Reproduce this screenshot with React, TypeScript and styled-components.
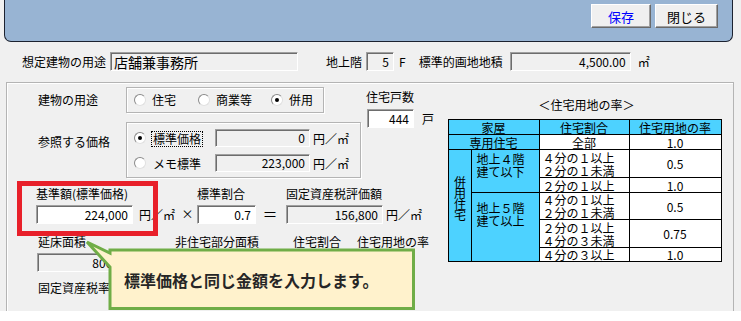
import React from 'react';
import styled, { createGlobalStyle } from 'styled-components';

const GlobalStyle = createGlobalStyle`
  * { box-sizing: border-box; }
  html, body { margin: 0; padding: 0; background: #fff; }
  body {
    font-family: "Noto Sans CJK JP", "Noto Sans", sans-serif;
    font-size: 12px;
    color: #000;
  }
`;

const Window = styled.div`
  position: relative;
  width: 741px;
  height: 311px;
  background: #f0f0f0;
  overflow: hidden;
  display: flex;
  flex-direction: column;
`;

const Header = styled.div`
  height: 42px;
  margin: 0 8px 0 4px;
  background: #98b4d3;
  border: 1px solid #1c2230;
  border-top: none;
  border-radius: 0 0 7px 7px;
  display: flex;
  justify-content: flex-end;
  align-items: flex-start;
  gap: 4px;
  padding: 4px 14px 0 0;
`;

const Button = styled.button<{ $w: number; $blue?: boolean }>`
  width: ${(p) => p.$w}px;
  height: 24px;
  padding: 0;
  font-family: inherit;
  font-size: 13px;
  color: ${(p) => (p.$blue ? '#0000ff' : '#000')};
  background: #f0f0f0;
  border: 1px solid;
  border-color: #fff #696969 #696969 #fff;
  box-shadow: inset -1px -1px 0 #a0a0a0;
`;

const TopRow = styled.div`
  display: flex;
  align-items: center;
  height: 19px;
  margin-top: 10px;
  padding-left: 22px;
`;

const Label = styled.span<{ $ml?: number }>`
  margin-left: ${(p) => p.$ml ?? 0}px;
  line-height: 14px;
  white-space: nowrap;
`;

const TextBox = styled.div<{ $w: number; $white?: boolean; $left?: boolean; $size?: number; $h?: number; $ml?: number }>`
  flex: none;
  width: ${(p) => p.$w}px;
  height: ${(p) => p.$h ?? 19}px;
  margin-left: ${(p) => p.$ml ?? 0}px;
  background: ${(p) => (p.$white ? '#fff' : '#f0f0f0')};
  border: 1px solid;
  border-color: #a0a0a0 #fff #fff #a0a0a0;
  box-shadow: inset 1px 1px 0 #6d6d6d;
  display: flex;
  align-items: center;
  justify-content: ${(p) => (p.$left ? 'flex-start' : 'flex-end')};
  padding: 0 4px 0 3px;
  font-size: ${(p) => p.$size ?? 12}px;
  line-height: 1;
  white-space: nowrap;
  overflow: hidden;
`;

const Group = styled.div`
  flex: 1;
  margin: 11px 7px 0 6px;
  border: 1px solid #b4b4b4;
  border-bottom: none;
  box-shadow: inset 1px 1px 0 #fff;
  display: flex;
`;

const LeftCol = styled.div`
  width: 433px;
  flex: none;
  display: flex;
  flex-direction: column;
  padding-top: 4px;
`;

const TopArea = styled.div`
  display: flex;
  align-items: flex-start;
`;

const Choices = styled.div`
  display: flex;
  flex-direction: column;
  padding-left: 31px;
`;

const ChoiceRow = styled.div<{ $mt?: number; $top?: boolean }>`
  display: flex;
  align-items: ${(p) => (p.$top ? 'flex-start' : 'center')};
  margin-top: ${(p) => p.$mt ?? 0}px;
`;

const RowLabel = styled.span<{ $mt?: number }>`
  width: 88px;
  flex: none;
  line-height: 14px;
  margin-top: ${(p) => p.$mt ?? 0}px;
`;

const Frame = styled.div<{ $w: number; $h: number; $column?: boolean }>`
  width: ${(p) => p.$w}px;
  height: ${(p) => p.$h}px;
  border: 1px solid #b4b4b4;
  box-shadow: inset 1px 1px 0 #fff, 1px 1px 0 #fff;
  display: flex;
  flex-direction: ${(p) => (p.$column ? 'column' : 'row')};
  align-items: ${(p) => (p.$column ? 'stretch' : 'center')};
  gap: ${(p) => (p.$column ? '7px' : '0')};
  padding: ${(p) => (p.$column ? '6px 0 0 7px' : '0 0 0 7px')};
`;

const Option = styled.label<{ $mr?: number }>`
  display: flex;
  align-items: center;
  gap: 6px;
  margin-right: ${(p) => p.$mr ?? 0}px;
  line-height: 14px;
  white-space: nowrap;
`;

const Radio = styled.span<{ $on?: boolean }>`
  flex: none;
  width: 12px;
  height: 12px;
  border-radius: 50%;
  background: #fff;
  border: 1px solid;
  border-color: #8a8a8a #e0e0e0 #e0e0e0 #8a8a8a;
  display: inline-flex;
  align-items: center;
  justify-content: center;

  &::after {
    content: '';
    width: 4px;
    height: 4px;
    border-radius: 50%;
    background: ${(p) => (p.$on ? '#000' : 'transparent')};
  }
`;

const PriceRow = styled.div`
  display: flex;
  align-items: center;
  height: 18px;
`;

const PriceName = styled.span<{ $focus?: boolean }>`
  width: 64px;
  margin-left: 5px;
  flex: none;

  & > span {
    display: inline-block;
    line-height: 14px;
    padding: 0 1px;
    border: 1px dotted ${(p) => (p.$focus ? '#000' : 'transparent')};
  }
`;

const Unit = styled.span<{ $ml?: number; $w?: number }>`
  margin-left: ${(p) => p.$ml ?? 0}px;
  width: ${(p) => (p.$w ? `${p.$w}px` : 'auto')};
  flex: none;
  line-height: 19px;
  white-space: nowrap;
`;

const HouseCount = styled.div`
  margin-left: 5px;
  padding-top: 3px;
  display: flex;
  flex-direction: column;
  gap: 5px;
`;

const Inline = styled.div`
  display: flex;
  align-items: center;
`;

const LowerArea = styled.div`
  margin-top: 9px;
  display: flex;
  flex-direction: column;
`;

const FormulaRow = styled.div<{ $pl: number; $mt?: number }>`
  display: flex;
  align-items: flex-end;
  padding-left: ${(p) => p.$pl}px;
  margin-top: ${(p) => p.$mt ?? 0}px;
`;

const Field = styled.div<{ $w?: number; $ml?: number }>`
  display: flex;
  flex-direction: column;
  gap: 4px;
  flex: none;
  width: ${(p) => (p.$w ? `${p.$w}px` : 'auto')};
  margin-left: ${(p) => p.$ml ?? 0}px;
`;

const Op = styled.span<{ $w: number; $ml: number; $size?: number }>`
  width: ${(p) => p.$w}px;
  margin-left: ${(p) => p.$ml}px;
  flex: none;
  text-align: center;
  font-size: ${(p) => p.$size ?? 12}px;
  line-height: 17px;
  align-self: flex-end;
  margin-bottom: 2px;
`;

const TablePanel = styled.div`
  padding: 15px 0 0 8px;
  display: flex;
  flex-direction: column;
  align-items: center;
  width: 281px;
`;

const TableTitle = styled.div`
  line-height: 14px;
  margin-bottom: 7px;
  padding-left: 4px;
`;

const RateTable = styled.table`
  border-collapse: collapse;
  table-layout: fixed;
  width: 273px;
  font-size: 12px;
  line-height: 13px;
`;

const Col = styled.col<{ $w: number }>`
  width: ${(p) => p.$w}px;
`;

const Tr = styled.tr<{ $h: number }>`
  height: ${(p) => p.$h}px;
`;

const Cell = styled.td<{ $bg?: boolean; $pl?: number; $pt?: number; $pb?: number }>`
  border: 1px solid #000;
  padding: ${(p) => p.$pt ?? 0}px 0 ${(p) => p.$pb ?? 0}px ${(p) => p.$pl ?? 0}px;
  background: ${(p) => (p.$bg ? '#4dd2ff' : '#fff')};
  text-align: ${(p) => (p.$pl !== undefined ? 'left' : 'center')};
  vertical-align: ${(p) => (p.$pt !== undefined ? 'top' : 'middle')};
  white-space: nowrap;
`;

const Vertical = styled.span`
  display: inline-block;
  writing-mode: vertical-rl;
  text-orientation: upright;
  letter-spacing: -1px;
  line-height: 14px;
`;

const Highlight = styled.div`
  position: absolute;
  left: 17px;
  top: 181px;
  width: 141px;
  height: 55px;
  border: 5px solid #e8202a;
`;

const Callout = styled.div`
  position: absolute;
  left: 84px;
  top: 238px;
  width: 334px;
  height: 74px;

  svg {
    position: absolute;
    inset: 0;
  }
`;

const CalloutText = styled.div`
  position: relative;
  padding: 32px 0 0 40px;
  font-size: 16px;
  font-weight: 700;
  line-height: 20px;
  color: #262626;
  white-space: nowrap;
`;

export default function App() {
  return (
    <>
      <GlobalStyle />
      <Window>
        <Header>
          <Button $w={60} $blue>保存</Button>
          <Button $w={63}>閉じる</Button>
        </Header>

        <TopRow>
          <Label>想定建物の用途</Label>
          <TextBox $w={188} $ml={4} $left $size={14}>店舗兼事務所</TextBox>
          <Label $ml={28}>地上階</Label>
          <TextBox $w={28} $ml={4}>5</TextBox>
          <Label $ml={5}>F</Label>
          <Label $ml={13}>標準的画地地積</Label>
          <TextBox $w={121} $ml={7}>4,500.00</TextBox>
          <Label $ml={7}>㎡</Label>
        </TopRow>

        <Group>
          <LeftCol>
            <TopArea>
              <Choices>
                <ChoiceRow>
                  <RowLabel>建物の用途</RowLabel>
                  <Frame $w={198} $h={26}>
                    <Option $mr={22}><Radio />住宅</Option>
                    <Option $mr={19}><Radio />商業等</Option>
                    <Option><Radio $on />併用</Option>
                  </Frame>
                </ChoiceRow>
                <ChoiceRow $mt={9} $top>
                  <RowLabel $mt={13}>参照する価格</RowLabel>
                  <Frame $w={235} $h={56} $column>
                    <PriceRow>
                      <Radio $on />
                      <PriceName $focus><span>標準価格</span></PriceName>
                      <TextBox $w={95} $h={18}>0</TextBox>
                      <Unit $ml={3}>円／㎡</Unit>
                    </PriceRow>
                    <PriceRow>
                      <Radio />
                      <PriceName><span>メモ標準</span></PriceName>
                      <TextBox $w={95} $h={18}>223,000</TextBox>
                      <Unit $ml={3}>円／㎡</Unit>
                    </PriceRow>
                  </Frame>
                </ChoiceRow>
              </Choices>
              <HouseCount>
                <Label>住宅戸数</Label>
                <Inline>
                  <TextBox $w={47} $ml={1} $white>444</TextBox>
                  <Unit $ml={8}>戸</Unit>
                </Inline>
              </HouseCount>
            </TopArea>

            <LowerArea>
              <FormulaRow $pl={29}>
                <Field>
                  <Label>基準額(標準価格)</Label>
                  <TextBox $w={97} $white>224,000</TextBox>
                </Field>
                <Unit $ml={6} $w={40}>円／㎡</Unit>
                <Op $w={13} $ml={2}>×</Op>
                <Field $ml={3}>
                  <Label>標準割合</Label>
                  <TextBox $w={59} $white>0.7</TextBox>
                </Field>
                <Op $w={16} $ml={6} $size={15}>＝</Op>
                <Field $ml={8}>
                  <Label>固定資産税評価額</Label>
                  <TextBox $w={97}>156,800</TextBox>
                </Field>
                <Unit $ml={3}>円／㎡</Unit>
              </FormulaRow>

              <FormulaRow $pl={30} $mt={11}>
                <Field $w={138}>
                  <Label $ml={1}>延床面積</Label>
                  <TextBox $w={97}>800.00</TextBox>
                </Field>
                <Field $w={118}>
                  <Label>非住宅部分面積</Label>
                  <TextBox $w={90}>0.00</TextBox>
                </Field>
                <Field $w={64}>
                  <Label>住宅割合</Label>
                  <TextBox $w={55}>1</TextBox>
                </Field>
                <Field>
                  <Label>住宅用地の率</Label>
                  <TextBox $w={53}>0.5</TextBox>
                </Field>
              </FormulaRow>

              <FormulaRow $pl={31} $mt={9}>
                <Label>固定資産税率</Label>
              </FormulaRow>
            </LowerArea>
          </LeftCol>

          <TablePanel>
            <TableTitle>＜住宅用地の率＞</TableTitle>
            <RateTable>
              <colgroup>
                <Col $w={23} />
                <Col $w={68} />
                <Col $w={90} />
                <Col $w={92} />
              </colgroup>
              <tbody>
                <Tr $h={15}>
                  <Cell $bg colSpan={2}>家屋</Cell>
                  <Cell $bg>住宅割合</Cell>
                  <Cell $bg>住宅用地の率</Cell>
                </Tr>
                <Tr $h={15}>
                  <Cell $bg colSpan={2}>専用住宅</Cell>
                  <Cell>全部</Cell>
                  <Cell>1.0</Cell>
                </Tr>
                <Tr $h={28}>
                  <Cell $bg rowSpan={5} $pb={14}><Vertical>併用住宅</Vertical></Cell>
                  <Cell $bg rowSpan={2} $pl={5} $pt={2}>地上４階<br />建て以下</Cell>
                  <Cell $pl={3}>４分の１以上<br />２分の１未満</Cell>
                  <Cell>0.5</Cell>
                </Tr>
                <Tr $h={15}>
                  <Cell $pl={3}>２分の１以上</Cell>
                  <Cell>1.0</Cell>
                </Tr>
                <Tr $h={27}>
                  <Cell $bg rowSpan={3} $pl={5} $pt={8}>地上５階<br />建て以上</Cell>
                  <Cell $pl={3}>４分の１以上<br />２分の１未満</Cell>
                  <Cell>0.5</Cell>
                </Tr>
                <Tr $h={28}>
                  <Cell $pl={3}>２分の１以上<br />４分の３未満</Cell>
                  <Cell>0.75</Cell>
                </Tr>
                <Tr $h={14}>
                  <Cell $pl={3}>４分の３以上</Cell>
                  <Cell>1.0</Cell>
                </Tr>
              </tbody>
            </RateTable>
          </TablePanel>
        </Group>

        <Highlight />

        <Callout>
          <svg width="334" height="74" viewBox="0 0 334 74">
            <path
              d="M26 12 H329.5 V70.5 H26 V29 L3 4 L26 15 Z"
              fill="#fff2cc"
              stroke="#70ad47"
              strokeWidth="3"
            />
          </svg>
          <CalloutText>標準価格と同じ金額を入力します。</CalloutText>
        </Callout>
      </Window>
    </>
  );
}
